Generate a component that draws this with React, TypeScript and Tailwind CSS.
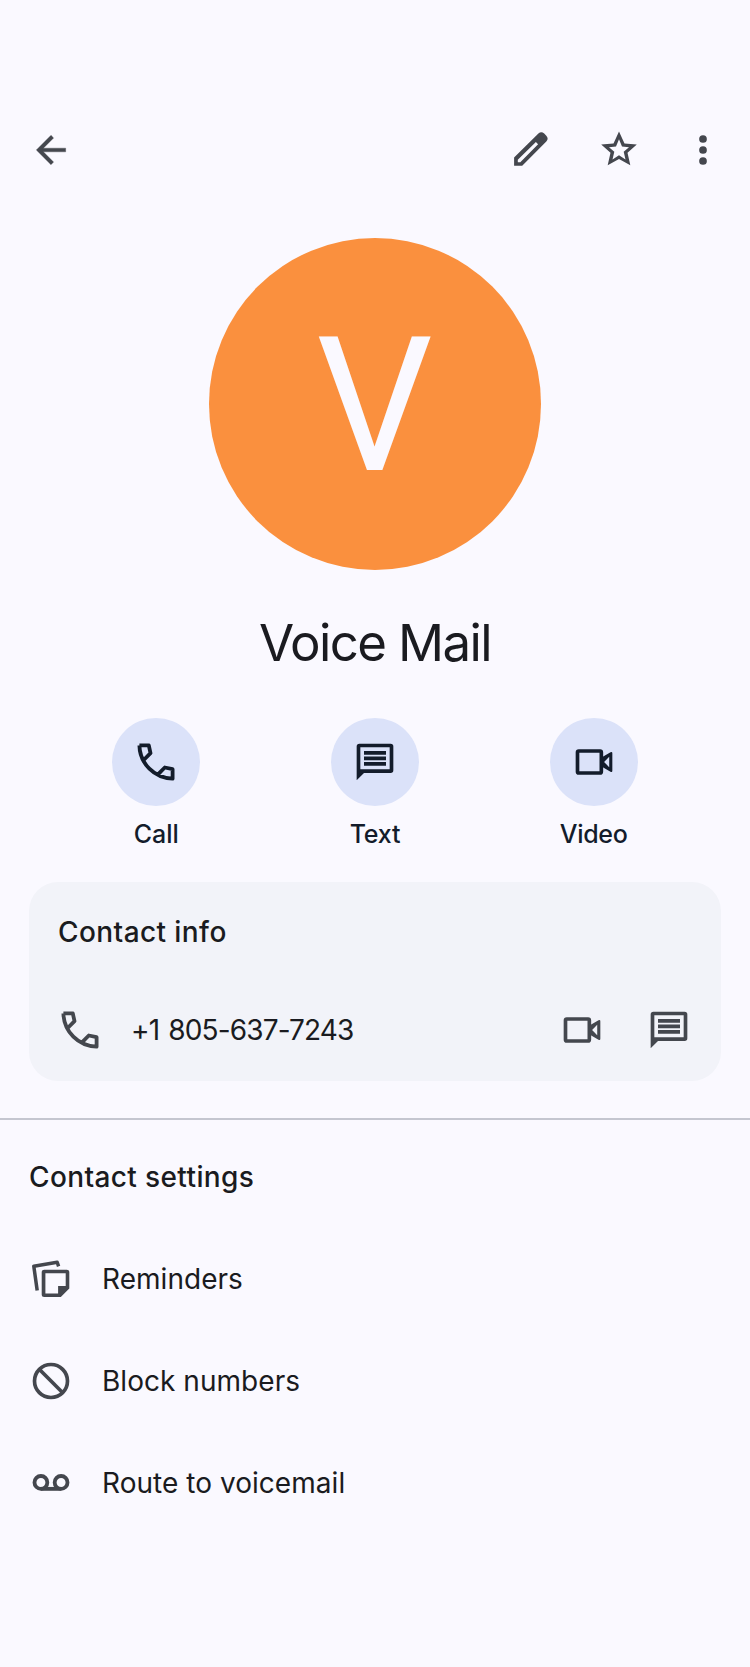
import type { ReactNode } from 'react';

type IconProps = { className?: string };

function Svg({ children, className = '', viewBox = '0 0 24 24' }: IconProps & { children: ReactNode; viewBox?: string }) {
  return (
    <svg viewBox={viewBox} fill="currentColor" className={`size-11 shrink-0 ${className}`} aria-hidden="true">
      {children}
    </svg>
  );
}

const BackIcon = () => (
  <Svg>
    <path
      d="M20 11H7.83l5.59-5.59L12 4l-8 8 8 8 1.41-1.41L7.83 13H20v-2z"
      stroke="currentColor"
      strokeWidth="0.2"
      strokeLinejoin="round"
    />
  </Svg>
);

const EditIcon = () => (
  <Svg viewBox="0 0 44 44">
    <path
      fillRule="evenodd"
      d="M5.1 37.8V29.5L29.4 5.6Q32.3 2.9 35.2 5.6L37.3 7.7Q40 10.6 37.3 13.5L13.2 37.8ZM8.8 34.3H11.3L29.1 16.2 26.9 14 8.8 31.7Z"
    />
  </Svg>
);

const StarIcon = () => (
  <Svg viewBox="0 0 44 44">
    <path
      fillRule="evenodd"
      d="M22 3.6 27.5 15.5 39.8 16.6 30.5 24.7 33.3 37.3 22 31 10.7 37.3 13.5 24.7 4.2 16.6 16.5 15.5ZM22 11.2 19 18.5 12 19.2 17.3 23.8 15.5 31.4 22 27.3 28.5 31.4 26.7 23.8 32 19.2 25 18.5Z"
    />
  </Svg>
);

const MoreIcon = () => (
  <Svg>
    <circle cx="12" cy="6" r="2.1" />
    <circle cx="12" cy="12" r="2.1" />
    <circle cx="12" cy="18" r="2.1" />
  </Svg>
);

const PhoneIcon = () => (
  <Svg viewBox="0 0 44 44">
    <path
      d="M5.4 5.4H14.8L16.5 13.2 10.2 19.5M5.4 5.4C5.8 23.6 20.4 38.2 38.6 38.6V29.2L30.8 27.5 24.5 33.8"
      fill="none"
      stroke="currentColor"
      strokeWidth="3.8"
      strokeLinejoin="round"
    />
  </Svg>
);

const MessageIcon = () => (
  <Svg>
    <path fillRule="evenodd" d="M2 22V3.5Q2 2 3.5 2H20.5Q22 2 22 3.5V16.5Q22 18 20.5 18H6ZM4 4V16H20V4Z" />
    <path d="M6 6h12v2H6zM6 9h12v2H6zM6 12h12v2H6z" />
  </Svg>
);

const VideoIcon = () => (
  <Svg>
    <rect x="3" y="6" width="13" height="12" rx="0.7" fill="none" stroke="currentColor" strokeWidth="2" />
    <path fillRule="evenodd" d="M16.8 9.2 21 6.7Q22 6.2 22 7.2V16.8Q22 17.8 21 17.3L16.8 14.8ZM17.5 12 20.3 14.8V9.2Z" />
  </Svg>
);

const RemindersIcon = () => (
  <Svg viewBox="0 0 44 44">
    <path d="M8.2 33.6 4.8 9.2 28.2 5.3 29.6 9.4" fill="none" stroke="currentColor" strokeWidth="3.5" strokeLinejoin="round" />
    <path
      fillRule="evenodd"
      d="M15.2 12.7H37.8Q40.3 12.7 40.3 15.2V31.6L31.8 40.1H15.2Q12.7 40.1 12.7 37.6V15.2Q12.7 12.7 15.2 12.7ZM16.4 16.3V36.6H29.1V29H36.7V16.3Z"
    />
  </Svg>
);

const BlockIcon = () => (
  <Svg>
    <g fill="none" stroke="currentColor" strokeWidth="2">
      <circle cx="12" cy="12" r="9" />
      <path d="M5.6 5.6 18.4 18.4" />
    </g>
  </Svg>
);

const VoicemailIcon = () => (
  <Svg>
    <g fill="none" stroke="currentColor" strokeWidth="2.1">
      <circle cx="6.5" cy="11.7" r="3.5" />
      <circle cx="17.5" cy="11.7" r="3.5" />
      <path d="M6.5 15.2H17.5" />
    </g>
  </Svg>
);

function Action({ icon, label, spacing }: { icon: ReactNode; label: string; spacing: string }) {
  return (
    <button className="flex flex-col items-center text-[#131c2b]">
      <span className="flex size-[88px] items-center justify-center rounded-full bg-[#dbe2f9]">{icon}</span>
      <span className={`mt-3 text-[25px] leading-8 font-medium ${spacing}`}>{label}</span>
    </button>
  );
}

function Setting({ icon, label }: { icon: ReactNode; label: string }) {
  return (
    <li className="flex h-[102px] items-center gap-[29px]">
      <span className="text-[#44474e]">{icon}</span>
      <span className="text-[28px] leading-10 tracking-[0.04px]">{label}</span>
    </li>
  );
}

export default function App() {
  return (
    <main className="flex h-[1667px] w-[750px] flex-col overflow-hidden bg-[#faf9ff] font-['Inter',sans-serif] text-[#1a1b20]">
      <header className="mt-[127px] flex h-[45px] items-center pr-[25px] pl-[29px] text-[#44474e]">
        <BackIcon />
        <div className="ml-auto flex items-center">
          <EditIcon />
          <span className="ml-[44px] flex"><StarIcon /></span>
          <span className="ml-[40px] flex"><MoreIcon /></span>
        </div>
      </header>

      <section className="mt-[66px] flex flex-col items-center">
        <div className="flex size-[332px] items-center justify-center rounded-full bg-[#fa903e]">
          <span className="scale-x-[0.98] pt-[5px] font-['Roboto',sans-serif] text-[187px] leading-none text-[#faf9ff]">V</span>
        </div>
        <h1 className="mt-[41px] text-[51px] leading-[64px] tracking-[-1.6px]">Voice Mail</h1>
      </section>

      <section className="mt-[43px] grid grid-cols-3 px-[47px]">
        <Action icon={<PhoneIcon />} label="Call" spacing="tracking-[0px]" />
        <Action icon={<MessageIcon />} label="Text" spacing="tracking-[-0.2px]" />
        <Action icon={<VideoIcon />} label="Video" spacing="tracking-[-0.3px]" />
      </section>

      <section className="mx-[29px] mt-8 flex h-[199px] flex-col rounded-[29px] bg-[#f2f3f9] pt-[30px] pr-[30px] pl-[29px]">
        <h2 className="text-[28px] leading-10 font-medium tracking-[0.42px]">Contact info</h2>
        <div className="mt-14 flex h-11 items-center text-[#44474e]">
          <PhoneIcon />
          <span className="ml-[29px] text-[28px] leading-10 tracking-[-0.85px] text-[#1a1b20] [word-spacing:2px]">+1 805-637-7243</span>
          <span className="ml-auto flex gap-[43px]">
            <VideoIcon />
            <MessageIcon />
          </span>
        </div>
      </section>

      <hr className="mt-[37px] h-[2px] shrink-0 border-0 bg-[#c4c6d0]" />

      <section className="px-[29px] pt-[37px]">
        <h2 className="text-[28px] leading-10 font-medium tracking-[0.38px]">Contact settings</h2>
        <ul className="mt-[31px]">
          <Setting icon={<RemindersIcon />} label="Reminders" />
          <Setting icon={<BlockIcon />} label="Block numbers" />
          <Setting icon={<VoicemailIcon />} label="Route to voicemail" />
        </ul>
      </section>
    </main>
  );
}
